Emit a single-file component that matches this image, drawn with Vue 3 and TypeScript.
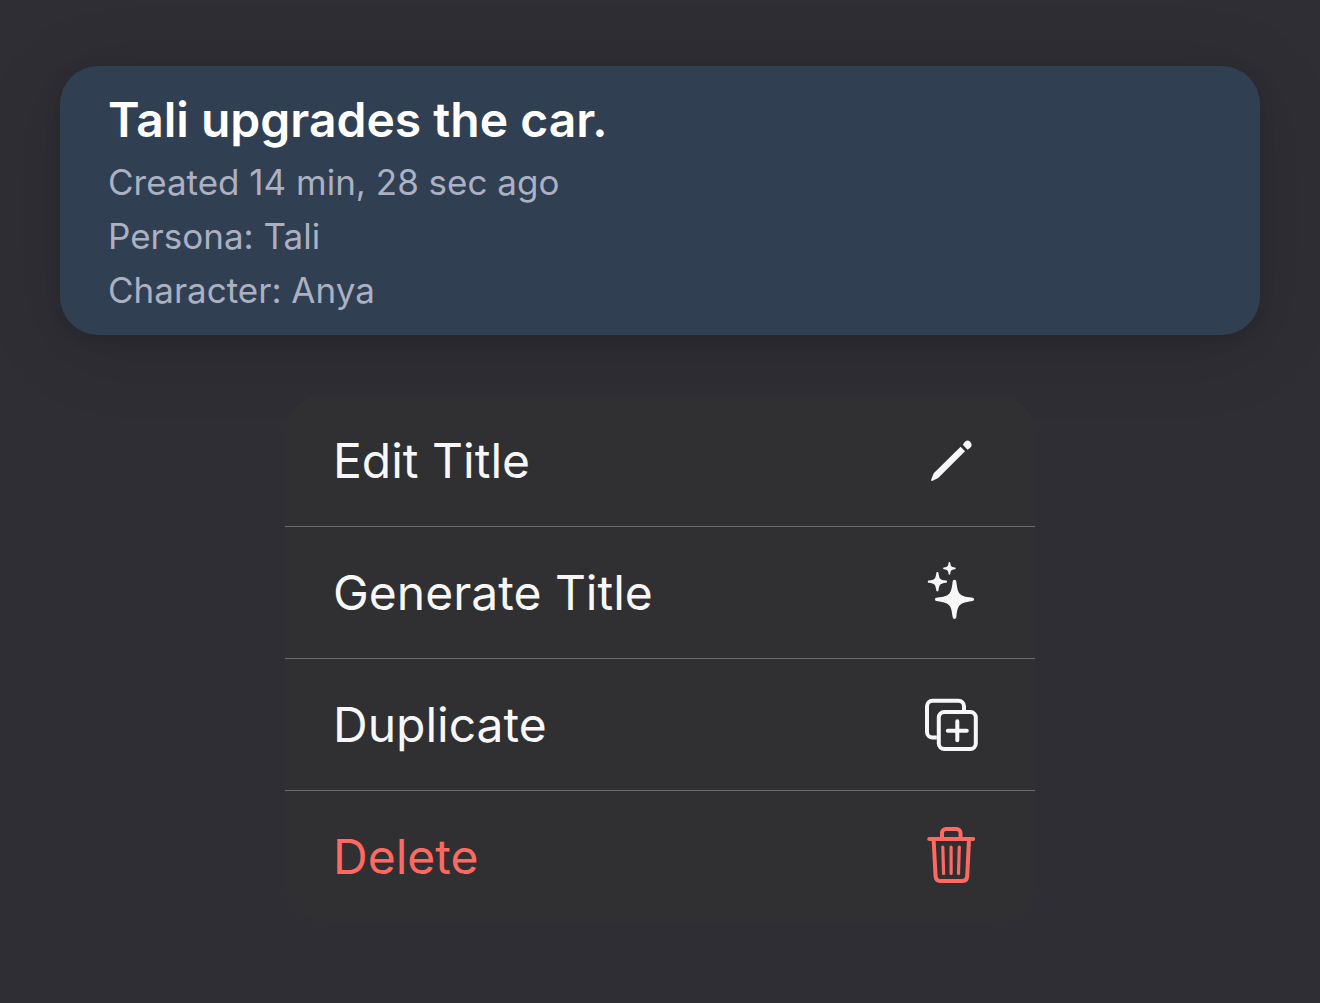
<script setup lang="ts">
type IconName = 'pencil' | 'sparkles' | 'duplicate' | 'trash'

interface MenuItem {
  label: string
  icon: IconName
  destructive?: boolean
}

const chat = {
  title: 'Tali upgrades the car.',
  details: ['Created 14 min, 28 sec ago', 'Persona: Tali', 'Character: Anya'],
}

const items: MenuItem[] = [
  { label: 'Edit Title', icon: 'pencil' },
  { label: 'Generate Title', icon: 'sparkles' },
  { label: 'Duplicate', icon: 'duplicate' },
  { label: 'Delete', icon: 'trash', destructive: true },
]
</script>

<template>
  <main class="screen">
    <article class="card">
      <h1 class="title">{{ chat.title }}</h1>
      <p v-for="line in chat.details" :key="line" class="detail">{{ line }}</p>
    </article>

    <div class="menu" role="menu">
      <button
        v-for="item in items"
        :key="item.label"
        type="button"
        role="menuitem"
        class="item"
        :class="{ destructive: item.destructive }"
      >
        <span>{{ item.label }}</span>
        <svg class="icon" viewBox="0 0 60 61" aria-hidden="true">
          <g v-if="item.icon === 'pencil'" fill="currentColor">
            <path d="M10.3 49.2 12.3 44.2Q12.7 43.2 13.5 42.4L39.6 16.8 44 21.2 18 47.2Q17.2 48.1 16.2 48.6L11.6 50.8Q9.4 51.4 10.3 49.2Z" />
            <path d="M41.800 14.800 43.300 12.400Q46.300 9 49.400 12 51.900 15 49.200 17.800L46.600 19.700Z" />
          </g>
          <g v-else-if="item.icon === 'sparkles'" fill="currentColor">
            <path d="M33.5 17.8C34.7 17.8 35.2 18.7 35.4 20 36.8 32 38.2 34.2 50.4 35.6 52 35.8 53 36.2 53 37.4S52 39 50.4 39.2C38.2 40.8 36.8 42.8 35.4 54.8 35.2 56.1 34.7 57 33.5 57S31.8 56.1 31.6 54.8C30.2 42.8 28.8 40.8 16.6 39.2 15 39 14 38.6 14 37.4S15 35.8 16.6 35.6C28.8 34.2 30.2 32 31.6 20 31.8 18.7 32.3 17.8 33.5 17.8Z" />
            <path d="M16.4 10C17.2 10 17.4 10.6 17.5 11.2 18.4 17 19 17.8 25 18.6 25.6 18.7 26 19 26 19.7S25.6 20.7 25 20.8C19 21.6 18.4 22.4 17.5 28.2 17.4 28.8 17.2 29.4 16.4 29.4S15.4 28.8 15.3 28.2C14.4 22.4 13.8 21.6 7.8 20.8 7.2 20.7 6.8 20.4 6.8 19.7S7.2 18.7 7.8 18.6C13.8 17.8 14.4 17 15.3 11.2 15.4 10.6 15.6 10 16.4 10Z" />
            <path d="M28.4 0C28.9 0 29.1 .4 29.2 .8 29.8 4.6 30.2 5 33.9 5.6 34.4 5.7 34.7 5.9 34.7 6.4S34.4 7.1 33.9 7.2C30.2 7.8 29.8 8.2 29.2 12 29.1 12.4 28.9 12.8 28.4 12.8S27.7 12.4 27.6 12C27 8.2 26.6 7.8 22.9 7.2 22.4 7.1 22.1 6.9 22.1 6.4S22.4 5.7 22.9 5.6C26.6 5 27 4.6 27.6 .8 27.7 .4 27.9 0 28.4 0Z" />
          </g>
          <g v-else-if="item.icon === 'duplicate'" fill="none" stroke="currentColor" stroke-width="4">
            <rect x="17.8" y="18" width="37" height="37" rx="5.5" />
            <path d="M15.8 43.5H11.5A5.5 5.5 0 0 1 6 38V12.3A5.5 5.5 0 0 1 11.5 6.8H37.5A5.5 5.5 0 0 1 43 12.3V16" />
            <path d="M36.3 27.2V46.2M26.8 36.7H45.8" stroke-linecap="round" />
          </g>
          <g v-else fill="none" stroke="currentColor" stroke-width="4" stroke-linecap="round" stroke-linejoin="round">
            <path d="M8.2 13H52.2" />
            <path d="M21 12.5V7A4 4 0 0 1 25 3H35.5A4 4 0 0 1 39.5 7V12.5" />
            <path d="M12.6 13.5 14.6 50.5Q14.9 54.9 19.2 54.9H41.6Q45.9 54.9 46.2 50.5L48 13.5" />
            <path d="M21.8 21 22.6 47.5M30.1 21V47.5M38.3 21 37.5 47.5" stroke-width="3.2" />
          </g>
        </svg>
      </button>
    </div>
  </main>
</template>

<style>
body {
  margin: 0;
  background: #2f2e34;
}
</style>

<style scoped>
.screen {
  box-sizing: border-box;
  min-height: 100vh;
  padding: 66px 60px;
  display: flex;
  flex-direction: column;
  align-items: center;
  gap: 60px;
  background: #2f2e34;
  font-family: Inter, "Liberation Sans", sans-serif;
}

.card {
  box-sizing: border-box;
  width: 100%;
  padding: 24px 48px 18px;
  border-radius: 38px;
  background: #313f52;
  box-shadow: 0 4px 16px rgba(0, 0, 0, 0.1), 0 12px 80px rgba(0, 0, 0, 0.14);
}

.title {
  margin: 0 0 5px;
  font-size: 48px;
  font-weight: 600;
  line-height: 60px;
  color: #ffffff;
}

.detail {
  margin: 0;
  font-size: 35px;
  line-height: 54px;
  color: #abb0c2;
}

.menu {
  width: 100%;
  max-width: 750px;
  border-radius: 38px;
  overflow: hidden;
  background: #303032;
}

.item {
  box-sizing: border-box;
  width: 100%;
  height: 132px;
  padding: 0 54px 0 48px;
  display: flex;
  align-items: center;
  justify-content: space-between;
  border: 0;
  border-bottom: 1px solid #6b6b6c;
  background: none;
  color: #f7f7f7;
  font-family: inherit;
  font-size: 48px;
  text-align: left;
}

.item:last-child {
  height: 131px;
  border-bottom: 0;
}

.destructive {
  color: #ff6961;
}

.icon {
  flex: none;
  width: 60px;
  height: 61px;
}
</style>
